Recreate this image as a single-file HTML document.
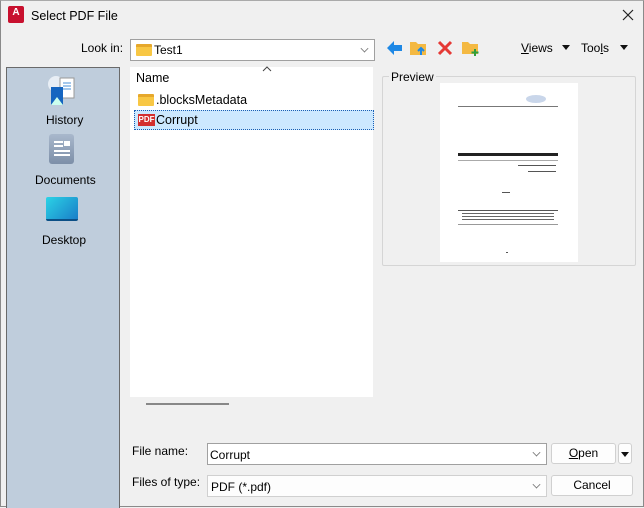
<!DOCTYPE html>
<html><head><style>
*{margin:0;padding:0;box-sizing:border-box}
body{width:644px;height:507px;background:#f0f0f0;font-family:"Liberation Sans",sans-serif;font-size:12px;color:#000;position:relative;overflow:hidden}
.a{position:absolute}
.win{position:absolute;left:0;top:0;width:644px;height:507px;border:1px solid #8a8a8a;border-top-color:#aaa}
.combo{position:absolute;background:#fff;border:1px solid #a0a0a0}
.btn{position:absolute;background:#fdfdfd;border:1px solid #d0d0d0;border-radius:3px;text-align:center}
.chev{position:absolute;right:6px;top:5px;width:7px;height:7px;border-right:1px solid #777;border-bottom:1px solid #777;transform:rotate(45deg) scale(.8)}
.tri{position:absolute;width:0;height:0;border-left:4px solid transparent;border-right:4px solid transparent;border-top:5px solid #111}
</style></head><body>
<div class="win"></div>
<!-- title -->
<div class="a" style="left:8px;top:6px;width:16px;height:17px;background:#c8102e;border-radius:2px;color:#fff;font-weight:bold;font-size:10px;text-align:center;line-height:13px">A</div>
<div class="a" style="left:31px;top:9px;font-size:12.5px">Select PDF File</div>
<svg class="a" style="left:622px;top:9px" width="12" height="12"><path d="M1 1L11 11M11 1L1 11" stroke="#222" stroke-width="1.2"/></svg>

<!-- look in -->
<div class="a" style="left:81px;top:41px">Look in:</div>
<div class="combo" style="left:130px;top:39px;width:245px;height:22px">
 <div class="a" style="left:5px;top:4px;width:16px;height:12px;background:#f8c744;border-top:3px solid #e6a82c;border-radius:1px"></div>
 <div class="a" style="left:23px;top:3px">Test1</div>
 <div class="chev" style="top:5px"></div>
</div>
<!-- toolbar -->
<svg class="a" style="left:386px;top:40px" width="18" height="16"><path d="M1 8L8 1V5H16V11H8V15Z" fill="#1e88e5"/></svg>
<svg class="a" style="left:409px;top:38px" width="20" height="20"><path d="M1 4h6l2 2h8v11H1z" fill="#f4b942"/><path d="M12 17v-6M9 13l3-3 3 3" stroke="#1e88e5" stroke-width="2" fill="none"/></svg>
<svg class="a" style="left:437px;top:40px" width="16" height="16"><path d="M2 2L14 14M14 2L2 14" stroke="#e53935" stroke-width="3"/></svg>
<svg class="a" style="left:461px;top:38px" width="20" height="20"><path d="M1 4h6l2 2h8v10H1z" fill="#f4b942"/><path d="M14 11v7M10.5 14.5h7" stroke="#2e9e3e" stroke-width="2"/></svg>
<div class="a" style="left:521px;top:41px"><u>V</u>iews</div>
<div class="tri" style="left:562px;top:45px"></div>
<div class="a" style="left:581px;top:41px">Too<u>l</u>s</div>
<div class="tri" style="left:620px;top:45px"></div>

<!-- sidebar -->
<div class="a" style="left:6px;top:67px;width:114px;height:441px;background:#bfcddc;border:1px solid #6a6a6a;border-bottom:none"></div>
<svg class="a" style="left:46px;top:74px" width="32" height="32"><circle cx="10" cy="10" r="8" fill="#e8eef5"/><rect x="14" y="4" width="14" height="20" fill="#fff" stroke="#999"/><path d="M17 9h8M17 12h8M17 15h8" stroke="#4a90d9"/><path d="M5 13h12v18l-6-4-6 4z" fill="#1565c0"/><path d="M5 31l6-8 6 8z" fill="#cfe"/></svg>
<div class="a" style="left:46px;top:113px">History</div>
<div class="a" style="left:49px;top:134px;width:25px;height:30px;background:linear-gradient(#a9b8cc,#7d8fa8);border-radius:3px"></div>
<div class="a" style="left:54px;top:141px;width:9px;height:2px;background:#fff;box-shadow:0 4px 0 #fff"></div>
<div class="a" style="left:64px;top:141px;width:6px;height:5px;background:#fff"></div>
<div class="a" style="left:54px;top:150px;width:16px;height:2px;background:#fff;box-shadow:0 4px 0 #fff"></div>
<div class="a" style="left:35px;top:173px">Documents</div>
<div class="a" style="left:46px;top:197px;width:32px;height:24px;background:linear-gradient(135deg,#2bd3e6,#1a7ec8);border-radius:2px;border-bottom:2px solid #0b4f86"></div>
<div class="a" style="left:42px;top:233px">Desktop</div>

<!-- list -->
<div class="a" style="left:130px;top:67px;width:243px;height:330px;background:#fff"></div>
<svg class="a" style="left:262px;top:66px" width="10" height="6"><path d="M1 5L5 1L9 5" stroke="#444" fill="none"/></svg>
<div class="a" style="left:136px;top:71px;font-size:12.5px">Name</div>
<div class="a" style="left:138px;top:94px;width:16px;height:12px;background:#f8c744;border-top:3px solid #e6a82c;border-radius:1px"></div>
<div class="a" style="left:156px;top:93px;font-size:12.5px">.blocksMetadata</div>
<div class="a" style="left:134px;top:110px;width:240px;height:20px;background:#cce8ff;border:1px dotted #1a5fb4"></div>
<div class="a" style="left:138px;top:114px;width:17px;height:12px;background:#d32f2f;color:#fff;font-size:8px;font-weight:bold;line-height:12px;text-align:center">PDF</div>
<div class="a" style="left:156px;top:113px;font-size:12.5px">Corrupt</div>
<div class="a" style="left:146px;top:403px;width:83px;height:2px;background:#888"></div>

<!-- preview -->
<div class="a" style="left:382px;top:76px;width:254px;height:190px;border:1px solid #d5d5d5;border-radius:2px"></div>
<div class="a" style="left:389px;top:70px;background:#f0f0f0;padding:0 2px">Preview</div>
<div class="a" style="left:440px;top:83px;width:138px;height:179px;background:#fff">
 <div class="a" style="left:86px;top:12px;width:20px;height:8px;border-radius:50%;background:#c9d6ea"></div>
 <div class="a" style="left:18px;top:23px;width:100px;height:1px;background:#777"></div>
 <div class="a" style="left:18px;top:70px;width:100px;height:3px;background:#222"></div>
 <div class="a" style="left:18px;top:77px;width:100px;height:1px;background:#aaa"></div>
 <div class="a" style="left:78px;top:82px;width:38px;height:1px;background:#555"></div>
 <div class="a" style="left:88px;top:88px;width:28px;height:1px;background:#555"></div>
 <div class="a" style="left:62px;top:109px;width:8px;height:1px;background:#555"></div>
 <div class="a" style="left:18px;top:127px;width:100px;height:1px;background:#555"></div>
 <div class="a" style="left:22px;top:130px;width:92px;height:8px;background:repeating-linear-gradient(#666 0 1px,#fff 1px 3px)"></div>
 <div class="a" style="left:18px;top:141px;width:100px;height:1px;background:#999"></div>
 <div class="a" style="left:66px;top:169px;width:2px;height:1px;background:#555"></div>
</div>

<!-- bottom -->
<div class="a" style="left:132px;top:444px">File name:</div>
<div class="combo" style="left:207px;top:443px;width:340px;height:22px"><div class="a" style="left:2px;top:4px">Corrupt</div><div class="chev"></div></div>
<div class="btn" style="left:551px;top:443px;width:65px;height:21px;line-height:19px"><u>O</u>pen</div>
<div class="btn" style="left:618px;top:443px;width:14px;height:21px"><div class="tri" style="left:2px;top:8px"></div></div>
<div class="a" style="left:132px;top:475px">Files of type:</div>
<div class="combo" style="left:207px;top:475px;width:340px;height:22px;border-color:#d0d0d0;background:#fdfdfd"><div class="a" style="left:3px;top:4px">PDF (*.pdf)</div><div class="chev"></div></div>
<div class="btn" style="left:551px;top:475px;width:82px;height:21px;line-height:19px">Cancel</div>
</body></html>
